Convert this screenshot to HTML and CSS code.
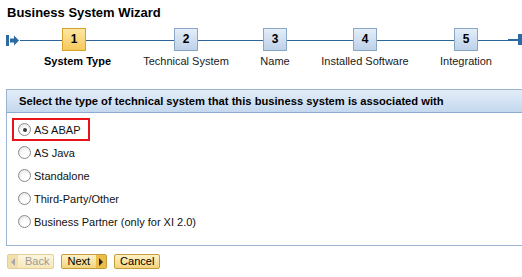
FILE: index.html
```html
<!DOCTYPE html>
<html>
  <head>
    <meta charset="utf-8">
    <title>Business System Wizard</title>
    <link rel="stylesheet" href="styles.css">
  </head>

  <body>
    <div class="wizard">
      <h1 class="title">Business System Wizard</h1>

      <div class="roadmap">
        <span class="road-start">
          <svg width="14" height="11" viewBox="0 0 14 11">
            <rect x="0" y="0" width="3" height="11" fill="#2d6aa3"/>
            <path d="M4 3.5 H8 V0.5 L13 5.5 L8 10.5 V7.5 H4 Z" fill="#2d6aa3"/>
          </svg>
        </span>
        <ol class="steps">
          <li class="step step-type current">
            <span class="step-num">1</span>
            <span class="step-label">System Type</span>
          </li>
          <li class="step step-tech">
            <span class="step-num">2</span>
            <span class="step-label">Technical System</span>
          </li>
          <li class="step step-name">
            <span class="step-num">3</span>
            <span class="step-label">Name</span>
          </li>
          <li class="step step-soft">
            <span class="step-num">4</span>
            <span class="step-label">Installed Software</span>
          </li>
          <li class="step step-integ">
            <span class="step-num">5</span>
            <span class="step-label">Integration</span>
          </li>
        </ol>
        <span class="road-end"></span>
      </div>

      <section class="panel">
        <div class="panel-head">Select the type of technical system that this business system is associated with</div>
        <div class="panel-body">
          <label class="option selected"><span class="radio checked"></span>AS ABAP</label>
          <label class="option"><span class="radio"></span>AS Java</label>
          <label class="option"><span class="radio"></span>Standalone</label>
          <label class="option"><span class="radio"></span>Third-Party/Other</label>
          <label class="option"><span class="radio"></span>Business Partner (only for XI 2.0)</label>
        </div>
      </section>

      <div class="actions">
        <button class="btn btn-back disabled"><span class="btn-arrow left"></span>Back</button>
        <button class="btn btn-next">Next<span class="btn-arrow right"></span></button>
        <button class="btn">Cancel</button>
      </div>
    </div>
  </body>
</html>
```

FILE: styles.css
```css
html, body {
  margin: 0;
  overflow: hidden;
  background-color: #fff;
}

body {
  font-family: "Liberation Sans", Arial, sans-serif;
  font-size: 11px;
  color: #000;
}

.title {
  margin: 0;
  padding: 5px 7px 0;
  font-size: 13px;
  line-height: 16px;
  font-weight: bold;
}

/* roadmap */
.roadmap {
  position: relative;
  display: flex;
  margin-top: 7px;
  height: 40px;
}

.roadmap::before {
  content: "";
  position: absolute;
  left: 20px;
  right: 4px;
  top: 12px;
  border-top: 1px solid #2e6598;
}

.road-start {
  position: absolute;
  left: 6px;
  top: 7px;
  line-height: 0;
}

.road-end {
  position: absolute;
  right: -2px;
  top: 6px;
  width: 6px;
  height: 11px;
  background-color: #2d6aa3;
}

.road-end::before {
  content: "";
  position: absolute;
  left: -10px;
  top: 5px;
  width: 10px;
  height: 2px;
  background-color: #2d6aa3;
}

.steps {
  display: flex;
  margin: 0 0 0 18px;
  padding: 0;
  list-style: none;
}

.step {
  position: relative;
  display: flex;
  flex-direction: column;
  align-items: center;
}

.step-type { width: 112px; }
.step-tech { width: 112px; }
.step-name { width: 66px; }
.step-soft { width: 114px; }
.step-integ { width: 88px; }

.step-num {
  box-sizing: border-box;
  width: 24px;
  height: 23px;
  line-height: 21px;
  text-align: center;
  font-weight: bold;
  font-size: 12px;
  border: 1px solid #8ba7c8;
  background: linear-gradient(#e4edf8, #bdd1e8);
}

.step.current .step-num {
  border-color: #d7a22c;
  background: linear-gradient(#fde7a2, #f6c95c);
}

.step-label {
  margin-top: 3px;
  line-height: 14px;
  white-space: nowrap;
  color: #1a1a1a;
}

.step.current .step-label {
  margin-left: 7px;
  font-weight: bold;
  color: #000;
}

/* panel */
.panel {
  margin: 21px 0 0 6px;
  width: 540px;
  border: 1px solid #9db3d2;
}

.panel-head {
  height: 22px;
  line-height: 22px;
  padding-left: 12px;
  font-size: 11.2px;
  font-weight: bold;
  border-bottom: 1px solid #8eaad0;
  background: linear-gradient(#e3edf8, #c4d8ee);
}

.panel-body {
  display: flex;
  flex-direction: column;
  align-items: flex-start;
  padding: 5px 0 12px 5px;
}

.option {
  box-sizing: border-box;
  display: inline-flex;
  align-items: center;
  gap: 3px;
  height: 23px;
  padding: 0 8px 0 4px;
  border: 2px solid transparent;
  color: #111;
}

.option.selected {
  border-color: #e8141b;
}

.radio {
  box-sizing: border-box;
  width: 13px;
  height: 13px;
  border-radius: 50%;
  border: 1px solid #8c8c8c;
  background: radial-gradient(circle at 60% 65%, #ffffff 30%, #dcdcdc 100%);
  display: flex;
  align-items: center;
  justify-content: center;
}

.radio.checked::after {
  content: "";
  width: 4px;
  height: 4px;
  border-radius: 50%;
  background-color: #3a3a3a;
}

/* buttons */
.actions {
  display: flex;
  gap: 7px;
  margin: 8px 0 0 7px;
}

.btn {
  box-sizing: border-box;
  display: inline-flex;
  align-items: center;
  height: 15px;
  padding: 0 5px;
  font-family: inherit;
  font-size: 11px;
  line-height: 13px;
  color: #000;
  border: 1px solid #c59b3c;
  border-radius: 2px;
  background: linear-gradient(#fdf2c6, #f4d47b);
}

.btn.disabled {
  color: #9a9a9a;
  border-color: #e4cf98;
  background: linear-gradient(#fdf6df, #f7e7b8);
}

.btn-back {
  padding: 0 4px 0 0;
  gap: 7px;
}

.btn-next {
  padding: 0 0 0 5px;
  gap: 6px;
}

.btn-arrow {
  width: 10px;
  height: 13px;
  display: flex;
  align-items: center;
  justify-content: center;
  background-color: #eabc49;
}

.btn.disabled .btn-arrow {
  background-color: #f2e0ac;
}

.btn-arrow.left::after {
  content: "";
  border-right: 4px solid #a8a8a8;
  border-top: 4px solid transparent;
  border-bottom: 4px solid transparent;
}

.btn-arrow.right::after {
  content: "";
  border-left: 4px solid #222;
  border-top: 4px solid transparent;
  border-bottom: 4px solid transparent;
}
```
